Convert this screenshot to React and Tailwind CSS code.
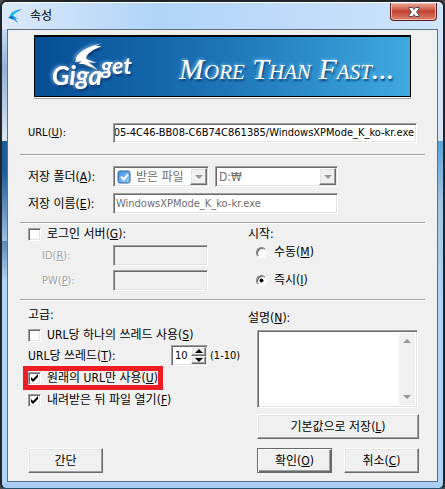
import React, { useState } from 'react';
import clsx from 'clsx';

const sunken =
  "border border-t-[#a0a0a0] border-l-[#a0a0a0] border-r-white border-b-white shadow-[inset_1px_1px_0_#696969,inset_-1px_-1px_0_#e3e3e3]";

const raised =
  "border border-t-white border-l-white border-r-[#696969] border-b-[#696969] shadow-[inset_-1px_-1px_0_#a0a0a0,inset_1px_1px_0_#e3e3e3]";

// Underlined keyboard shortcut, e.g. (U)
function Key({ children }) {
  return <span>(<u className="underline-offset-1">{children}</u>)</span>;
}

function Separator() {
  return <hr className="-mr-[6px] -ml-2 h-[2px] border-0 border-t border-t-[#a0a0a0] bg-white" />;
}

function Button({ children, primary, className }) {
  return (
    <button
      type="button"
      className={clsx(
        "h-[25px] bg-[#f0f0f0]",
        primary
          ? "border border-[#696969] shadow-[inset_1px_1px_0_#fff,inset_-1px_-1px_0_#696969,inset_-2px_-2px_0_#a0a0a0]"
          : raised,
        className
      )}
    >
      {children}
    </button>
  );
}

function CheckBox({ id, defaultChecked, children }) {
  return (
    <div className="flex h-5 items-center gap-[6px]">
      <span className="grid shrink-0">
        <input
          id={id}
          type="checkbox"
          defaultChecked={defaultChecked}
          className={clsx("peer col-start-1 row-start-1 size-[13px] appearance-none bg-white", sunken)}
        />
        <svg viewBox="0 0 13 13" className="pointer-events-none invisible col-start-1 row-start-1 size-[13px] peer-checked:visible">
          <path d="M3 5v3l2 2 5-5V2L5 7z" fill="#000" />
        </svg>
      </span>
      <label htmlFor={id} className="whitespace-nowrap">{children}</label>
    </div>
  );
}

function Radio({ id, value, checked, onChange, children }) {
  return (
    <div className="flex h-5 items-center gap-[7px]">
      <span className="grid shrink-0">
        <input
          id={id}
          type="radio"
          name="start"
          value={value}
          checked={checked}
          onChange={onChange}
          className="peer col-start-1 row-start-1 size-[11px] appearance-none rounded-full border border-t-[#808080] border-l-[#808080] border-r-white border-b-white bg-white shadow-[inset_1px_1px_0_#696969]"
        />
        <svg viewBox="0 0 11 11" className="pointer-events-none invisible col-start-1 row-start-1 size-[11px] peer-checked:visible">
          <circle cx="5.500" cy="5.500" r="2" />
        </svg>
      </span>
      <label htmlFor={id}>{children}</label>
    </div>
  );
}

// Closed combo box with an optional icon before the value
function Combo({ id, label, value, icon, className }) {
  return (
    <div className={clsx("grid h-[21px] items-center bg-white pr-px", sunken, className)}>
      <select
        id={id}
        aria-label={label}
        disabled
        className={clsx(
          "col-start-1 row-start-1 w-full appearance-none bg-transparent text-[#6d6d6d] opacity-100",
          icon ? "pl-[22px]" : "pl-[3px]"
        )}
      >
        <option>{value}</option>
      </select>
      {icon && <span className="pointer-events-none col-start-1 row-start-1 ml-[3px]">{icon}</span>}
      <span className={clsx("pointer-events-none col-start-1 row-start-1 grid h-[17px] w-[17px] place-items-center justify-self-end bg-[#f0f0f0]", raised)}>
        <svg viewBox="0 0 8 4" className="h-1 w-2"><path d="M0 0h8L4 4z" fill="#969696" /></svg>
      </span>
    </div>
  );
}

function FolderCheck() {
  return (
    <svg viewBox="0 0 14 14" className="size-[14px]">
      <defs>
        <linearGradient id="fc" x1="0" y1="0" x2="1" y2="1">
          <stop offset="0" stopColor="#3d8fe0" />
          <stop offset="1" stopColor="#9bd0ff" />
        </linearGradient>
      </defs>
      <rect x="1" y="1" width="12" height="12" rx="2" fill="url(#fc)" stroke="#2f5f96" />
      <path d="M4 6.500l2.500 3L11 4.500" fill="none" stroke="#fff" strokeWidth="2" />
    </svg>
  );
}

function BirdIcon() {
  return (
    <svg viewBox="0 0 14 14" className="size-[14px]">
      <path d="M14 0C8 1 3 3 2 7L0 9l5 1 5 4-3-5 4 1-6-3c1-3 5-4 9-7z" fill="#1094ee" />
      <path d="M12 1C7 2 4 4 3 7l2 0C6 4 9 3 12 1z" fill="#0bd3f4" />
      <path d="M2 7l3 2 1 2-4-2z" fill="#0b57c4" />
    </svg>
  );
}

function Banner() {
  return (
    <div className="mr-2 ml-[6px] flex h-[62px] items-center border border-t-2 border-black bg-linear-to-r from-[#064e96] via-[#1d75b8] to-[#3fa9df] shadow-[0_1px_0_#fff,0_2px_0_#a0a0a0]">
      <svg viewBox="0 0 100 58" className="h-[58px] w-[100px] shrink-0" role="img" aria-label="Gigaget">
        <defs>
          <filter id="glow" x="-20%" y="-20%" width="140%" height="140%">
            <feDropShadow dx="-2" dy="-1" stdDeviation="1.500" floodColor="#8fc4f2" floodOpacity=".6" />
            <feDropShadow dx="1" dy="2" stdDeviation="1" floodColor="#022c5e" floodOpacity=".8" />
          </filter>
        </defs>
        <g filter="url(#glow)" fill="#fff" fontFamily="Lato, 'Liberation Sans', sans-serif" fontStyle="italic" fontWeight="700">
          <text x="17" y="47" fontSize="26">Giga</text>
          <text x="66" y="36" fontSize="23">get</text>
          <path d="M67 5C55 8 44 13 41 20c0 2 0 3-1 4l7-1-3 3 5 0 14 6-10-8 9 1-11-4c0-6 8-10 16-13l-7 0z" />
        </g>
      </svg>
      <p className="ml-11 pt-1 whitespace-nowrap font-['Liberation_Serif',serif] text-[30px] italic text-white [font-variant-caps:small-caps] [text-shadow:-1px_-1px_3px_#6bb8ea,1px_2px_2px_#05396e]">
        More Than Fast...
      </p>
    </div>
  );
}

export default function App() {
  const [start, setStart] = useState("now");
  const [threads, setThreads] = useState(10);

  return (
    <div className="min-h-screen bg-[#4b4b50] text-xs leading-4 text-black font-['DejaVu_Sans_Condensed','DejaVu_Sans','Noto_Sans_CJK_KR',sans-serif]">
      <div className="flex min-h-screen flex-col rounded-[7px] border-2 border-[#20252c] border-b-[#27506d] bg-[#b4d6f8]">
        {/* Title bar */}
        <header className="flex h-[27px] items-start rounded-t-[5px] border-t border-white bg-linear-to-r from-[#dce9f8] via-[#b0d4f8] via-35% to-[#cfe4fb] pr-[6px] pl-[6px]">
          <div className="flex h-[26px] flex-1 items-center gap-2">
            <BirdIcon />
            <h1>속성</h1>
          </div>
          <button
            type="button"
            aria-label="닫기"
            className="grid h-[18px] w-[47px] place-items-center rounded-b-[4px] border border-t-0 border-[#5a1f22] bg-linear-to-b from-[#e9a89c] via-[#c4422f] via-50% to-[#dc8470] shadow-[inset_0_0_0_1px_#f0b8ae]"
          >
            <svg viewBox="0 0 12 10" className="h-[10px] w-3">
              <path d="M1 .5h3.500L6 2.500 7.500.5H11v1.500L8.500 5 11 8v1.500H7.500L6 7.500l-1.500 2H1V8l2.500-3L1 2z" fill="#fff" stroke="#4b4b5a" />
            </svg>
          </button>
        </header>

        <div className="flex flex-1">
          <div className="w-[5px] shrink-0 bg-[#b0d4f8]">
            <div className="h-28 bg-linear-to-b from-[#c4ddf7] via-[#93b2d6] via-35% to-[#dbe8f5]" />
            <div className="h-[100px] bg-linear-to-b from-[#1d5c95] from-30% to-[#9dbfe3]" />
            <div className="h-10 bg-linear-to-b from-[#5f87b5] to-[#b0d4f8]" />
          </div>
          <main className="min-w-0 flex-1 border border-[#5f6f80] bg-[#f0f0f0] pt-[5px] pr-[18px] pb-2 pl-5">
            <Banner />

            {/* URL */}
            <div className="mt-[26px] grid grid-cols-[85px_1fr] items-center pr-[2px]">
              <label htmlFor="url" className="text-[11px]">URL<Key>U</Key>:</label>
              <div className={clsx("flex h-5 items-center justify-end overflow-hidden bg-white px-px", sunken)}>
                <div className="flex min-w-0 flex-1 justify-end overflow-hidden">
                  <input
                    id="url"
                    defaultValue="305-4C46-BB08-C6B74C861385/WindowsXPMode_K_ko-kr.exe"
                    className="w-[340px] shrink-0 bg-transparent pr-px text-right text-[11px] outline-none"
                  />
                </div>
              </div>
            </div>

            <div className="mt-[11px]"><Separator /></div>

            {/* Destination */}
            <div className="mt-[10px] grid grid-cols-[85px_1fr] items-center gap-y-[6px] pr-[81px]">
              <label htmlFor="folder" className="whitespace-nowrap">저장 폴더<Key>A</Key>:</label>
              <div className="flex gap-[6px]">
                <Combo id="folder" value="받은 파일" icon={<FolderCheck />} className="w-24" />
                <Combo id="drive" label="드라이브" value="D:₩" className="min-w-0 flex-1" />
              </div>
              <label htmlFor="name" className="whitespace-nowrap">저장 이름<Key>E</Key>:</label>
              <input
                id="name"
                disabled
                defaultValue="WindowsXPMode_K_ko-kr.exe"
                className={clsx("h-[21px] w-full min-w-0 bg-white pl-[2px] text-[11px] text-[#6d6d6d]", sunken)}
              />
            </div>

            <div className="mt-2"><Separator /></div>

            {/* Login and start */}
            <div className="mb-2 grid grid-cols-[220px_1fr]">
              <div>
                <CheckBox id="login">로그인 서버<Key>G</Key>:</CheckBox>
                <div className="mt-px grid grid-cols-[71px_95px] items-center gap-y-1 pl-[14px] text-[11px] text-[#a0a0a0] [text-shadow:1px_1px_0_#fff]">
                  <label htmlFor="user">ID<Key>R</Key>:</label>
                  <input id="user" disabled className={clsx("h-[21px] bg-[#f0f0f0]", sunken)} />
                  <label htmlFor="pw">PW<Key>P</Key>:</label>
                  <input id="pw" type="password" disabled className={clsx("h-[21px] bg-[#f0f0f0]", sunken)} />
                </div>
              </div>
              <fieldset>
                <legend className="pt-[2px]">시작:</legend>
                <div className="flex flex-col gap-2 pl-2">
                  <Radio id="manual" value="manual" checked={start === "manual"} onChange={() => setStart("manual")}>
                    수동<Key>M</Key>
                  </Radio>
                  <Radio id="now" value="now" checked={start === "now"} onChange={() => setStart("now")}>
                    즉시<Key>I</Key>
                  </Radio>
                </div>
              </fieldset>
            </div>

            <Separator />

            {/* Advanced */}
            <div className="mt-[6px] grid grid-cols-[220px_1fr]">
              <div>
                <h2>고급:</h2>
                <div className="mt-[2px]">
                  <CheckBox id="single">URL당 하나의 쓰레드 사용<Key>S</Key></CheckBox>
                </div>
                <div className="flex items-center">
                  <label htmlFor="threads" className="w-[143px]">URL당 쓰레드<Key>T</Key>:</label>
                  <div className={clsx("flex h-[21px] w-[37px] items-center justify-between bg-white pr-px pl-[3px]", sunken)}>
                    <input
                      id="threads"
                      value={threads}
                      onChange={(e) => setThreads(Number(e.target.value) || 1)}
                      className="w-4 bg-transparent text-[11px] outline-none"
                    />
                    <div className="flex h-[17px] w-[15px] flex-col">
                      <button
                        type="button"
                        aria-label="증가"
                        onClick={() => setThreads(Math.min(10, threads + 1))}
                        className={clsx("grid flex-1 place-items-center bg-[#f0f0f0]", raised)}
                      >
                        <svg viewBox="0 0 8 4" className="h-1 w-2"><path d="M0 4h8L4 0z" /></svg>
                      </button>
                      <button
                        type="button"
                        aria-label="감소"
                        onClick={() => setThreads(Math.max(1, threads - 1))}
                        className={clsx("grid flex-1 place-items-center bg-[#f0f0f0]", raised)}
                      >
                        <svg viewBox="0 0 8 4" className="h-1 w-2"><path d="M0 0h8L4 4z" /></svg>
                      </button>
                    </div>
                  </div>
                  <span className="ml-[2px] text-[11px]">(1-10)</span>
                </div>
                {/* Highlighted option */}
                <div className="-ml-[5px] flex h-6 w-[140px] items-center border-5 border-[#ee1c24]">
                  <CheckBox id="original" defaultChecked>원래의 URL만 사용<Key>U</Key></CheckBox>
                </div>
                <CheckBox id="open" defaultChecked>내려받은 뒤 파일 열기<Key>F</Key></CheckBox>
              </div>
              <div className="pt-[3px] pr-px">
                <label htmlFor="desc">설명<Key>N</Key>:</label>
                <div className={clsx("mt-1 ml-[9px] flex h-[78px] bg-white p-[2px]", sunken)}>
                  <textarea id="desc" className="min-w-0 flex-1 resize-none bg-white outline-none" />
                  <div className="flex w-4 flex-col items-center justify-between bg-[#f0f0f0] py-[6px]">
                    <svg viewBox="0 0 8 4" className="h-1 w-2"><path d="M0 4h8L4 0z" fill="#969696" /></svg>
                    <svg viewBox="0 0 8 4" className="h-1 w-2"><path d="M0 0h8L4 4z" fill="#969696" /></svg>
                  </div>
                </div>
              </div>
            </div>

            <div className="mt-1 flex justify-end">
              <Button className="w-[162px]">기본값으로 저장<Key>L</Key></Button>
            </div>
            <div className="mt-[9px] flex">
              <Button className="w-[75px]">간단</Button>
              <Button primary className="ml-auto w-[75px]">확인<Key>O</Key></Button>
              <Button className="ml-3 w-[75px]">취소<Key>C</Key></Button>
            </div>
          </main>
          <div className="w-[5px] shrink-0 bg-[#b0d4f8]">
            <div className="h-28 bg-linear-to-b from-[#cfe4fb] to-[#d8e6f4]" />
            <div className="h-40 bg-linear-to-b from-[#5aa5d6] via-[#a5c5e8] via-40% to-[#b0d4f8]" />
          </div>
        </div>
        <div className="h-[6px] rounded-b-[5px] bg-[#a9cff5]" />
      </div>
    </div>
  );
}
